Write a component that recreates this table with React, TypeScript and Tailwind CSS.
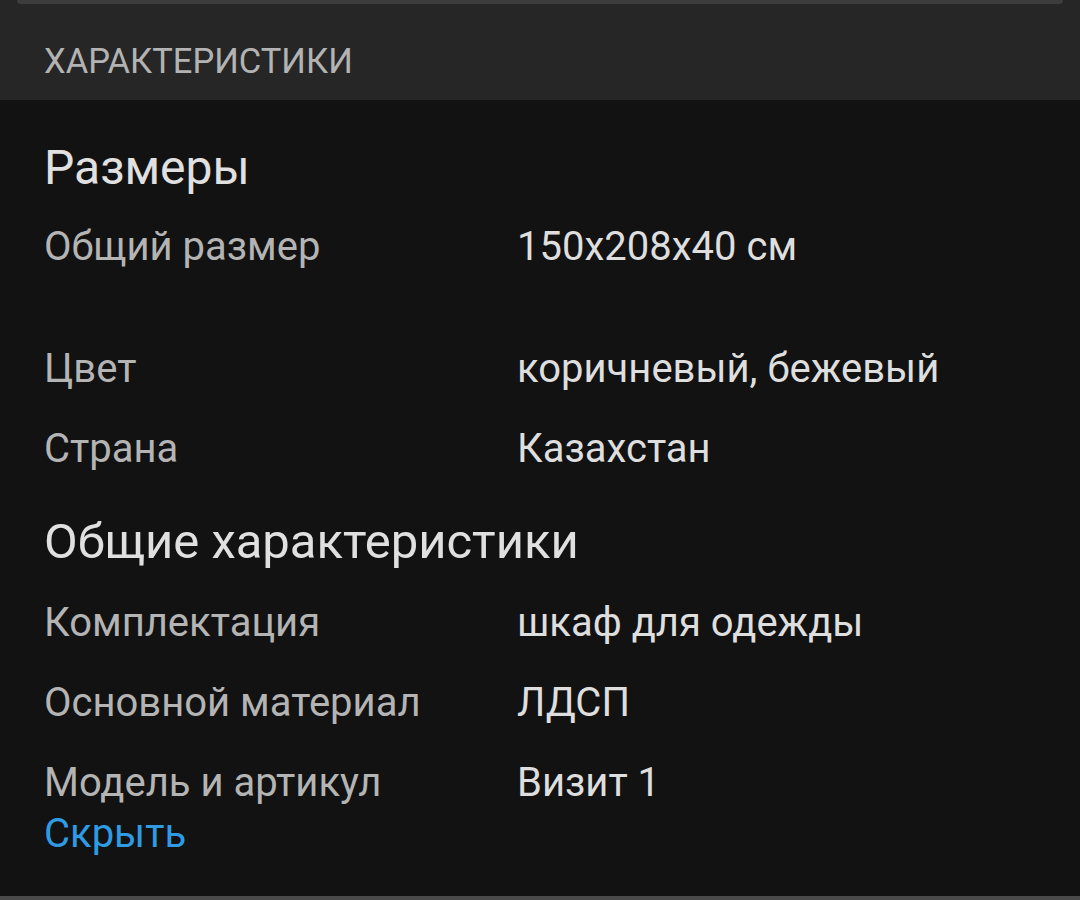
export default function App() {
  const font = { fontFamily: 'Roboto, "Noto Sans", sans-serif' };
  const Row = ({ label, value, extra }: { label: string; value: string; extra?: string }) => (
    <div className={`flex text-[40px] leading-[80px] ${extra ?? ""}`}>
      <div className="w-[473px] shrink-0 text-[#b4b4b4]">{label}</div>
      <div className="text-[#dedede]">{value}</div>
    </div>
  );
  return (
    <div className="w-[1080px] h-[900px] bg-[#121212] flex flex-col overflow-hidden" style={font}>
      <div className="h-[100px] bg-[#262626] relative shrink-0">
        <div className="absolute left-[17px] right-[17px] top-0 h-[4px] bg-[#3c3c3c] rounded-b-full" />
        <div className="pl-[44px] pt-[39px] text-[34.5px] leading-[44px] text-[#b3b3b3]">ХАРАКТЕРИСТИКИ</div>
      </div>
      <div className="flex-1 px-[44px] pt-[32px]">
        <div className="text-[48px] leading-[72px] text-[#e0e0e0] mb-[3px]">Размеры</div>
        <Row label="Общий размер" value="150x208x40 см" extra="h-[122px]" />
        <Row label="Цвет" value="коричневый, бежевый" />
        <Row label="Страна" value="Казахстан" />
        <div className="text-[49px] leading-[75px] text-[#e0e0e0] mt-[15px] mb-[4px]">Общие характеристики</div>
        <Row label="Комплектация" value="шкаф для одежды" />
        <Row label="Основной материал" value="ЛДСП" />
        <div className="flex text-[40px] leading-[48px] pt-[16px]">
          <div className="w-[473px] shrink-0 text-[#b4b4b4]">Модель и артикул</div>
          <div className="text-[#dedede]">Визит 1</div>
        </div>
        <div className="text-[40px] leading-[48px] pt-[3px] text-[#2f9be3]">Скрыть</div>
      </div>
      <div className="h-[4px] bg-[#4a4a4a] shrink-0" />
    </div>
  );
}
